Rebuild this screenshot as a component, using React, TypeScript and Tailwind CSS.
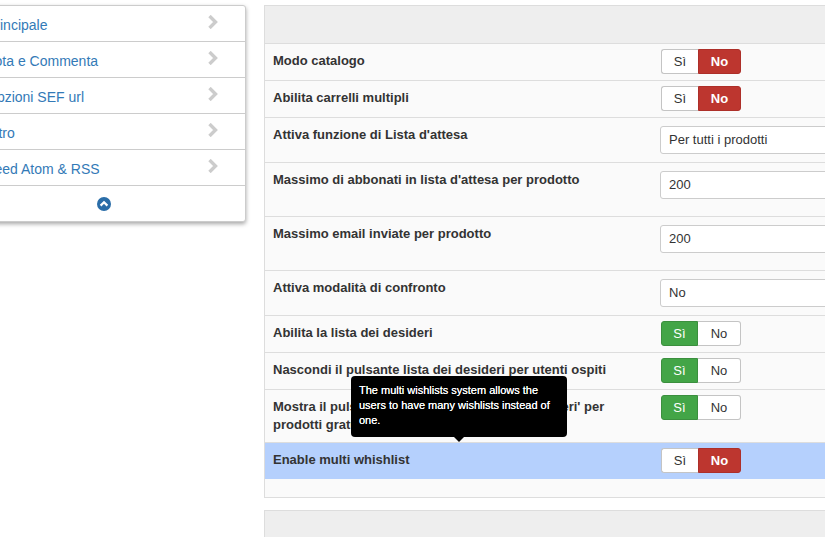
const menu = ['Principale', 'Vota e Commenta', 'Opzioni SEF url', 'Altro', 'Feed Atom & RSS']

type Row =
  | { label: string; h: string; kind: 'toggle'; on: boolean; blue?: boolean }
  | { label: string; h: string; kind: 'select' | 'input'; value: string }

const rows: Row[] = [
  { label: 'Modo catalogo', h: 'h-[37px]', kind: 'toggle', on: false },
  { label: 'Abilita carrelli multipli', h: 'h-[37px]', kind: 'toggle', on: false },
  { label: "Attiva funzione di Lista d'attesa", h: 'h-[45px]', kind: 'select', value: 'Per tutti i prodotti' },
  { label: "Massimo di abbonati in lista d'attesa per prodotto", h: 'h-[54px]', kind: 'input', value: '200' },
  { label: 'Massimo email inviate per prodotto', h: 'h-[54px]', kind: 'input', value: '200' },
  { label: 'Attiva modalità di confronto', h: 'h-[45px]', kind: 'select', value: 'No' },
  { label: 'Abilita la lista dei desideri', h: 'h-[37px]', kind: 'toggle', on: true },
  { label: 'Nascondi il pulsante lista dei desideri per utenti ospiti', h: 'h-[37px]', kind: 'toggle', on: true },
  { label: "Mostra il pulsante 'Aggiungi alla lista dei desideri' per prodotti gratuiti", h: 'h-[53px]', kind: 'toggle', on: true },
  { label: 'Enable multi whishlist', h: 'h-[37px]', kind: 'toggle', on: false, blue: true },
]

function Toggle({ on }: { on: boolean }) {
  return (
    <div className="ml-px flex h-[25px] w-20 text-[13px] leading-[23px] text-center">
      <div
        className={
          'w-[37px] rounded-l-[3px] border ' +
          (on
            ? 'bg-[#43a547] border-[#3b8f3e] text-white'
            : 'bg-white border-[#c4c4c4] border-r-0 text-[#333]')
        }
      >
        Sì
      </div>
      <div
        className={
          'flex-1 rounded-r-[3px] border ' +
          (on
            ? 'bg-white border-[#c4c4c4] border-l-0 text-[#333]'
            : 'bg-[#bd362f] border-[#ad2f29] text-white font-bold')
        }
      >
        No
      </div>
    </div>
  )
}

export default function App() {
  return (
    <div className="relative flex h-[537px] w-[825px] overflow-hidden bg-white pt-[5px] font-['Liberation_Sans',Arial,sans-serif] text-[#333]">
      <div className="ml-[-37px] mr-[18px] w-[283px] shrink-0">
        <div className="rounded-[3px] border border-[#ccc] bg-white shadow-[0_2px_4px_rgba(0,0,0,0.35)]">
          {menu.map((m) => (
            <div key={m} className="flex h-9 items-center border-b border-[#ccc] pl-[22px] pr-[27px] text-sm text-[#337ab7]">
              <span className="mt-[2px] flex-1">{m}</span>
              <svg width="11" height="14" viewBox="0 0 11 14" className="mt-[-3px]">
                <path d="M2.5 1 L8.5 7 L2.5 13" fill="none" stroke="#ccc" strokeWidth="3.4" />
              </svg>
            </div>
          ))}
          <div className="flex h-[35px] items-center justify-center pr-[2px]">
            <svg width="14" height="14" viewBox="0 0 14 14">
              <circle cx="7" cy="7" r="7" fill="#2a6da8" />
              <path d="M3.6 8.6 L7 5.2 L10.4 8.6" fill="none" stroke="#fff" strokeWidth="2.2" />
            </svg>
          </div>
        </div>
      </div>

      <div className="w-[600px] shrink-0">
        <div className="border border-[#ddd] bg-[#fafafa] pb-[18px]">
          <div className="h-[37px] bg-[#eee]" />
          {rows.map((r) => (
            <div
              key={r.label}
              className={
                'flex border-t border-[#ddd] pl-2 ' +
                r.h +
                (r.kind === 'toggle' && r.blue ? ' bg-[#b5d0fd]' : '')
              }
            >
              <div className="w-[387px] shrink-0 pt-2 pr-[40px] text-[13px] leading-[18px] font-bold">{r.label}</div>
              <div className="pt-[5px]">
                {r.kind === 'toggle' ? (
                  <Toggle on={r.on} />
                ) : (
                  <div className="mt-[3px] flex h-7 w-[220px] items-center rounded-[3px] border border-[#ccc] bg-white pl-2 text-[13px]">
                    {r.value}
                  </div>
                )}
              </div>
            </div>
          ))}
        </div>
        <div className="mt-[12px] h-[60px] border border-[#ddd] bg-[#eee]" />
      </div>

      <div className="absolute left-[351px] top-[376px] h-[61px] w-[216px] rounded-[4px] bg-black px-2 pt-[7px] text-[11px] leading-[15px] text-white [text-shadow:0_0_0.6px_#fff]">
        The multi wishlists system allows the users to have many wishlists instead of one.
        <div className="absolute bottom-[-5px] left-[103px] h-0 w-0 border-x-[5px] border-t-[5px] border-x-transparent border-t-black" />
      </div>
    </div>
  )
}
